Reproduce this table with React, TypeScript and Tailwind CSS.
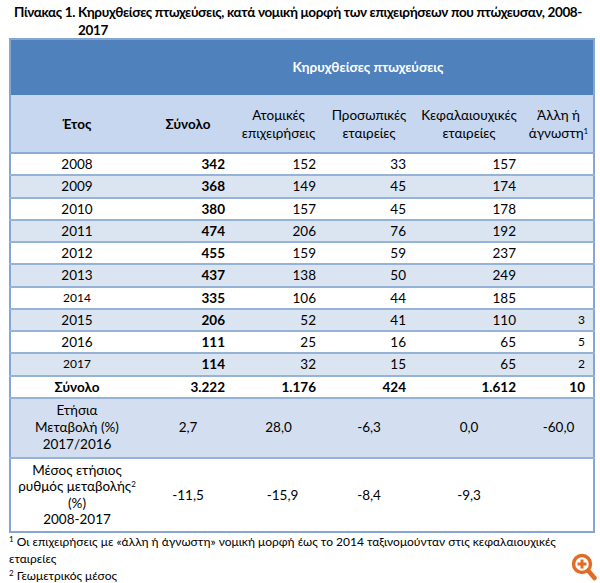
const rows = [
  { year: "2008", total: "342", indiv: "152", pers: "33", cap: "157", other: "" },
  { year: "2009", total: "368", indiv: "149", pers: "45", cap: "174", other: "" },
  { year: "2010", total: "380", indiv: "157", pers: "45", cap: "178", other: "" },
  { year: "2011", total: "474", indiv: "206", pers: "76", cap: "192", other: "" },
  { year: "2012", total: "455", indiv: "159", pers: "59", cap: "237", other: "" },
  { year: "2013", total: "437", indiv: "138", pers: "50", cap: "249", other: "" },
  { year: "2014", total: "335", indiv: "106", pers: "44", cap: "185", other: "", small: true },
  { year: "2015", total: "206", indiv: "52", pers: "41", cap: "110", other: "3" },
  { year: "2016", total: "111", indiv: "25", pers: "16", cap: "65", other: "5" },
  { year: "2017", total: "114", indiv: "32", pers: "15", cap: "65", other: "2", small: true },
]

function ZoomIcon() {
  return (
    <svg width="27" height="28" viewBox="0 0 27 28" fill="none">
      <circle cx="11" cy="11" r="8.5" stroke="#e36c24" strokeWidth="3.4" />
      <path d="M11 6.5v9M6.5 11h9" stroke="#e36c24" strokeWidth="3" />
      <path d="M17.5 18l6 7" stroke="#e36c24" strokeWidth="4.5" strokeLinecap="round" />
    </svg>
  )
}

export default function App() {
  const cell = "pr-2 text-right"
  return (
    <div className="w-[600px] h-[583px] bg-white overflow-hidden text-black font-['Lato','Open_Sans',sans-serif] relative">
      <div className="pl-[14px] pt-[3px] text-[13.5px] leading-[18px] tracking-[-0.35px] font-bold whitespace-nowrap flex">
        <span>Πίνακας 1.&nbsp;</span>
        <span>
          Κηρυχθείσες πτωχεύσεις, κατά νομική μορφή των επιχειρήσεων που πτώχευσαν, 2008-
          <br />
          2017
        </span>
      </div>

      <table className="ml-[9px] -mt-[1px] w-[584px] table-fixed border-collapse border-2 border-[#86a5d3] text-[13.5px]">
        <colgroup>
          <col className="w-[133px]" />
          <col className="w-[90px]" />
          <col className="w-[91px]" />
          <col className="w-[90px]" />
          <col className="w-[110px]" />
          <col className="w-[70px]" />
        </colgroup>
        <thead>
          <tr className="h-[56px] bg-[#4f81bd]">
            <th className="bg-[#4f81bd]"></th>
            <th colSpan={5} className="text-white font-bold text-center">
              Κηρυχθείσες πτωχεύσεις
            </th>
          </tr>
          <tr className="h-[58px] bg-[#c6d7ef] border-b-2 border-[#8eaad8] leading-[18px]">
            <th className="font-bold text-center">Έτος</th>
            <th className="font-bold text-center">Σύνολο</th>
            <th className="font-normal text-center">
              Ατομικές
              <br />
              επιχειρήσεις
            </th>
            <th className="font-normal text-center">
              Προσωπικές
              <br />
              εταιρείες
            </th>
            <th className="font-normal text-center">
              Κεφαλαιουχικές
              <br />
              εταιρείες
            </th>
            <th className="font-normal text-center">
              Άλλη ή
              <br />
              άγνωστη<sup className="text-[8px]">1</sup>
            </th>
          </tr>
        </thead>
        <tbody>
          {rows.map((r, i) => (
            <tr
              key={r.year}
              className={`h-[22px] border-b-2 border-[#95b3d7] ${i % 2 === 1 ? "bg-[#dbe5f2]" : "bg-white"}`}
            >
              <td className={`text-center ${r.small ? "text-[12px]" : ""}`}>{r.year}</td>
              <td className={`${cell} font-bold`}>{r.total}</td>
              <td className={cell}>{r.indiv}</td>
              <td className={cell}>{r.pers}</td>
              <td className={cell}>{r.cap}</td>
              <td className={`${cell} text-[12px]`}>{r.other}</td>
            </tr>
          ))}
          <tr className="h-[22px] border-b-2 border-[#95b3d7] bg-white font-bold">
            <td className="text-center">Σύνολο</td>
            <td className={cell}>3.222</td>
            <td className={cell}>1.176</td>
            <td className={cell}>424</td>
            <td className={cell}>1.612</td>
            <td className={cell}>10</td>
          </tr>
          <tr className="h-[60px] border-b-2 border-[#95b3d7] bg-[#d3dff0] leading-[17px] text-center">
            <td>
              Ετήσια
              <br />
              Μεταβολή (%)
              <br />
              2017/2016
            </td>
            <td>2,7</td>
            <td>28,0</td>
            <td>-6,3</td>
            <td>0,0</td>
            <td>-60,0</td>
          </tr>
          <tr className="h-[74px] bg-white leading-[16.5px] text-center">
            <td>
              Μέσος ετήσιος
              <br />
              ρυθμός μεταβολής<sup className="text-[8px]">2</sup>
              <br />
              (%)
              <br />
              2008-2017
            </td>
            <td>-11,5</td>
            <td className="pl-2">-15,9</td>
            <td>-8,4</td>
            <td>-9,3</td>
            <td></td>
          </tr>
        </tbody>
      </table>

      <div className="pl-[9px] text-[12px] leading-[17px]">
        <p>
          <sup className="text-[8px]">1</sup> Οι επιχειρήσεις με «άλλη ή άγνωστη» νομική μορφή έως το 2014 ταξινομούνταν στις κεφαλαιουχικές
          <br />
          εταιρείες
        </p>
        <p>
          <sup className="text-[8px]">2</sup> Γεωμετρικός μέσος
        </p>
      </div>

      <div className="absolute left-[571px] top-[553px]">
        <ZoomIcon />
      </div>
    </div>
  )
}
